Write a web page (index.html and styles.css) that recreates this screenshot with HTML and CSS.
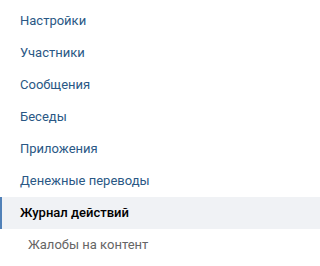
FILE: index.html
```html
<!DOCTYPE html>
<html lang="ru">
<head>
<meta charset="utf-8">
<link rel="stylesheet" href="styles.css">
</head>
<body>
<nav class="menu">
  <a class="item">Настройки</a>
  <a class="item">Участники</a>
  <a class="item">Сообщения</a>
  <a class="item">Беседы</a>
  <a class="item">Приложения</a>
  <a class="item">Денежные переводы</a>
  <a class="item active">Журнал действий</a>
  <a class="item sub">Жалобы на контент</a>
</nav>
</body>
</html>
```
FILE: styles.css
```css
html, body {
  margin: 0;
  padding: 0;
  background: #ffffff;
}
.menu {
  display: flex;
  flex-direction: column;
  padding-top: 5px;
  font-family: Roboto, "Liberation Sans", sans-serif;
  font-size: 13px;
}
.item {
  display: block;
  height: 32px;
  line-height: 32px;
  padding-left: 18px;
  border-left: 2px solid transparent;
  color: #2a5885;
  white-space: nowrap;
}
.item.active {
  background: #f0f2f5;
  border-left-color: #5181b8;
  color: #000000;
  font-weight: 500;
}
.item.sub {
  padding-left: 26px;
  color: #656565;
}
```
